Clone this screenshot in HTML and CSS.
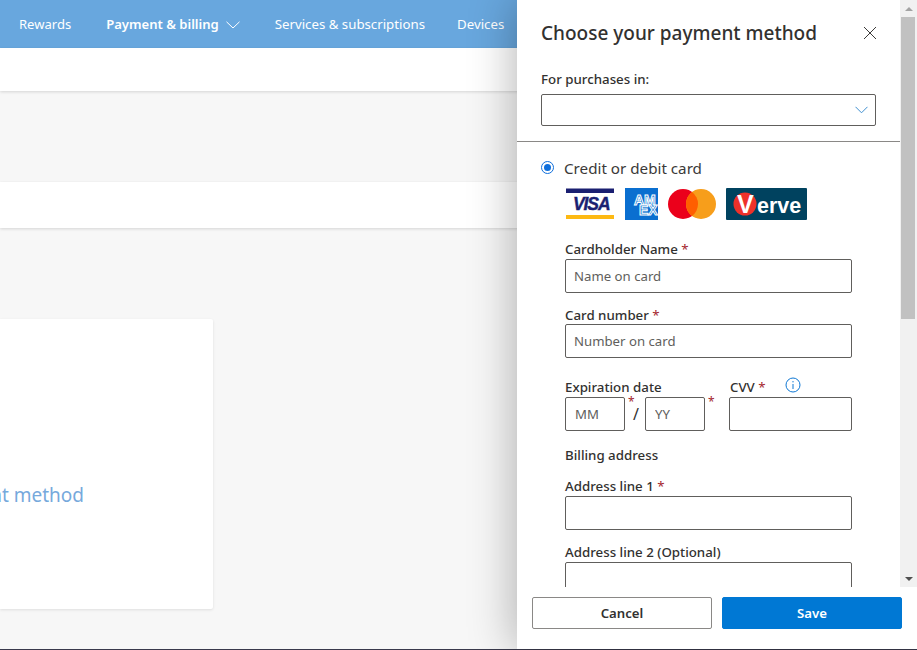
FILE: index.html
```html
<!DOCTYPE html>
<html lang="en">
<head>
<meta charset="utf-8">
<title>Choose your payment method</title>
<link rel="stylesheet" href="styles.css">
</head>
<body>
<div class="page">
  <nav class="topnav">
    <span class="nav-item">Rewards</span>
    <span class="nav-item nav-active">Payment &amp; billing
      <svg class="nav-chev" width="14" height="8" viewBox="0 0 14 8"><path d="M.5.8L7 7 13.5.8" fill="none" stroke="#fff" stroke-width="1"/></svg>
    </span>
    <span class="nav-item nav-wide">Services &amp; subscriptions</span>
    <span class="nav-item nav-wide">Devices</span>
  </nav>
  <div class="subbar"></div>
  <div class="band-gap"></div>
  <div class="subbar2"></div>
  <main class="content">
    <section class="card"><span class="card-link">Add a payment method</span></section>
  </main>
</div>

<aside class="panel">
  <div class="panel-top">
    <div class="scroller">
      <header class="panel-head">
        <div class="title-row">
          <h1 class="title">Choose your payment method</h1>
          <svg class="close" width="14" height="14" viewBox="0 0 14 14"><path d="M1 1l12 12M13 1L1 13" stroke="#3b3a39" stroke-width="1" fill="none"/></svg>
        </div>
        <label class="country-label">For purchases in:</label>
        <div class="select">
          <svg width="13" height="8" viewBox="0 0 13 8"><path d="M.5.8l6 6 6-6" fill="none" stroke="#3f8fd0" stroke-width="1"/></svg>
        </div>
      </header>
      <div class="form">
        <div class="radio-row">
          <span class="radio"><span class="radio-dot"></span></span>
          <span class="radio-label">Credit or debit card</span>
        </div>
        <div class="logos">
          <svg class="logo" width="50" height="32" viewBox="0 0 50 32">
            <rect x="1" y="0.5" width="48" height="4.5" fill="#1a1f71"/>
            <rect x="1" y="27" width="48" height="4" fill="#fdb913"/>
            <text x="8" y="22" class="visa-text">VISA</text>
          </svg>
          <svg class="logo" width="33" height="32" viewBox="0 0 33 32">
            <rect width="33" height="32" fill="#0a6fd0"/>
            <text x="9" y="17" class="amex-text">AM</text>
            <text x="14" y="27" class="amex-text">EX</text>
          </svg>
          <svg class="logo" width="48" height="32" viewBox="0 0 48 32">
            <circle cx="15" cy="16" r="15" fill="#eb001b"/>
            <circle cx="33" cy="16" r="15" fill="#f79e1b"/>
            <path d="M24 4a15 15 0 0 1 0 24a15 15 0 0 1 0-24z" fill="#ff5f00"/>
          </svg>
          <svg class="logo" width="81" height="32" viewBox="0 0 81 32">
            <rect width="81" height="32" rx="1" fill="#00425f"/>
            <circle cx="19" cy="16" r="11.5" fill="#ee312a"/>
            <text x="11" y="25" class="verve-v">V</text>
            <text x="31" y="25" class="verve-text">erve</text>
          </svg>
        </div>

        <label class="field-label first">Cardholder Name <span class="req">*</span></label>
        <input class="input" type="text" placeholder="Name on card">

        <label class="field-label second">Card number <span class="req">*</span></label>
        <input class="input" type="text" placeholder="Number on card">

        <div class="expiry">
          <div class="exp-col">
            <label class="exp-label">Expiration date</label>
            <div class="exp-inputs">
              <input class="input small" type="text" placeholder="MM">
              <span class="req sup">*</span>
              <span class="slash">/</span>
              <input class="input small" type="text" placeholder="YY">
              <span class="req sup">*</span>
            </div>
          </div>
          <div class="cvv-col">
            <div class="cvv-head">
              <label class="exp-label">CVV <span class="req">*</span></label>
              <svg class="info" width="16" height="16" viewBox="0 0 16 16">
                <circle cx="8" cy="8" r="7" fill="none" stroke="#0f78d4" stroke-width="1"/>
                <path d="M8 7v5M8 4v1.4" stroke="#0f78d4" stroke-width="1" fill="none"/>
              </svg>
            </div>
            <input class="input" type="text">
          </div>
        </div>

        <div class="billing">Billing address</div>

        <label class="field-label addr1">Address line 1 <span class="req">*</span></label>
        <input class="input" type="text">

        <label class="field-label addr2">Address line 2 (Optional)</label>
        <input class="input" type="text">
      </div>
    </div>
    <div class="scrollbar">
      <div class="sb-btn"><span class="arrow-up"></span></div>
      <div class="sb-track"><div class="sb-thumb"></div></div>
      <div class="sb-btn"><span class="arrow-down"></span></div>
    </div>
  </div>
  <footer class="panel-foot">
    <button class="btn btn-cancel">Cancel</button>
    <button class="btn btn-save">Save</button>
  </footer>
</aside>
</body>
</html>
```
FILE: styles.css
```css
* { box-sizing: border-box; }
html, body { margin: 0; height: 650px; overflow: hidden; }
body {
  font-family: "Noto Sans", "Open Sans", sans-serif;
  font-size: 14px;
  color: #323130;
  background: #f7f7f7;
  border-bottom: 1px solid #3a3a4c;
}
.page { height: 649px; overflow: hidden; background: #f7f7f7; display: flex; flex-direction: column; }
.topnav {
  height: 48px;
  flex: none;
  background: #68a7de;
  color: #fff;
  display: flex;
  align-items: center;
  padding-left: 19px;
  gap: 32px;
  font-size: 13.05px;
  white-space: nowrap;
}
.nav-wide { font-size: 13.25px; }
.nav-active { font-weight: 600; display: flex; align-items: center; gap: 7px; padding: 0 3px; }
.nav-chev { margin-top: 1px; }
.subbar { height: 43px; flex: none; background: #fff; box-shadow: 0 1px 3px rgba(0,0,0,.14); }
.band-gap { height: 91px; flex: none; }
.subbar2 { height: 46px; flex: none; background: #fff; box-shadow: 0 1px 3px rgba(0,0,0,.14); }
.content { flex: 1; padding-top: 91px; }
.card {
  width: 213px;
  height: 290px;
  background: #fff;
  border-radius: 0 2px 2px 0;
  box-shadow: 0 1px 3px rgba(0,0,0,.1);
  position: relative;
  overflow: hidden;
}
.card-link {
  position: absolute;
  right: 129px;
  top: 164px;
  font-size: 19px;
  line-height: 24px;
  color: #76a9dc;
  white-space: nowrap;
}

.panel {
  position: absolute;
  top: 0;
  left: 517px;
  width: 400px;
  height: 649px;
  background: #fff;
  box-shadow: 0 0 45px rgba(0,0,0,.32);
  display: flex;
  flex-direction: column;
}
.panel-top { height: 587px; flex: none; display: flex; }
.scroller { flex: 1; min-width: 0; overflow: hidden; }
.panel-head { height: 142px; padding: 0 24px; border-bottom: 1px solid #8a8886; }
.title-row { height: 66px; display: flex; justify-content: space-between; align-items: center; }
.title { margin: 0; font-size: 19px; font-weight: 500; color: #323130; line-height: 26px; }
.close { margin-right: -1px; }
.country-label { display: block; font-size: 13.3px; font-weight: 500; line-height: 18px; margin-top: 4px; }
.select {
  margin-top: 6px;
  height: 32px;
  border: 1px solid #605e5c;
  border-radius: 2px;
  display: flex;
  align-items: center;
  justify-content: flex-end;
  padding-right: 7px;
}
.form { padding: 15px 24px 0; }
.radio-row { display: flex; align-items: center; height: 21px; gap: 10px; }
.radio {
  width: 13px; height: 13px;
  border: 1.5px solid #0f6fdc;
  border-radius: 50%;
  display: flex; align-items: center; justify-content: center;
  flex: none;
}
.radio-dot { width: 7px; height: 7px; border-radius: 50%; background: #0f6fdc; }
.radio-label { font-size: 15.2px; color: #3b3a39; }
.logos { display: flex; gap: 10px; margin: 10px 0 0 24px; height: 32px; }
.logo { display: block; flex: none; }
.visa-text { font: italic 700 17.5px "Liberation Sans", sans-serif; fill: #1a1f71; stroke: #1a1f71; stroke-width: .4px; letter-spacing: -1.1px; }
.amex-text { font: 700 14px "Liberation Sans", sans-serif; fill: #0a6fd0; stroke: #fff; stroke-width: 1px; }
.verve-v { font: 700 25px "Liberation Sans", sans-serif; fill: #fff; }
.verve-text { font: 700 21.5px "Liberation Sans", sans-serif; fill: #fff; }
.field-label, .exp-label, .billing {
  display: block;
  font-size: 13.3px;
  font-weight: 500;
  line-height: 18px;
  color: #323130;
  white-space: nowrap;
}
.field-label { margin: 13px 0 1px 24px; }
.field-label.first { margin-top: 20px; }
.field-label.second { margin-bottom: 0; }
.field-label.addr1 { margin-top: 13px; }
.field-label.addr2 { margin-top: 13px; margin-bottom: 1px; }
.req { color: #a4262c; font-weight: 400; }
.input {
  display: block;
  width: 287px;
  height: 34px;
  margin-left: 24px;
  padding: 0 8px;
  border: 1px solid #605e5c;
  border-radius: 2px;
  background: #fff;
  font: 13.2px "Noto Sans", sans-serif;
  color: #323130;
  outline: none;
}
.input::placeholder { color: #605e5c; opacity: 1; }
.expiry { display: flex; gap: 24px; margin: 20px 0 0 24px; }
.exp-col { width: 140px; }
.exp-label { height: 18px; }
.exp-inputs { display: flex; margin-top: 1px; position: relative; }
.input.small { width: 60px; margin: 0; padding: 0 9px; }
.sup { width: 0; overflow: visible; position: relative; left: 3px; top: 0; font-size: 12px; line-height: 10px; height: 10px; }
.slash { width: 20px; align-self: center; text-align: center; line-height: 14px; color: #323130; font-size: 16px; position: relative; top: 0; left: 1px; }
.cvv-col { width: 123px; }
.cvv-col .input { width: 123px; margin: 1px 0 0; }
.cvv-head { display: flex; height: 18px; align-items: center; gap: 20px; }
.cvv-head .exp-label { margin-left: 1px; }
.info { flex: none; position: relative; top: -2px; left: -1px; }
.billing { margin: 15px 0 0 24px; }

.scrollbar { width: 17px; flex: none; background: #f1f1f1; display: flex; flex-direction: column; }
.sb-btn { height: 17px; display: flex; align-items: center; justify-content: center; flex: none; }
.arrow-up { width: 0; height: 0; border: 4px solid transparent; border-top: 0; border-bottom: 4px solid #a3a3a3; }
.arrow-down { width: 0; height: 0; border: 4px solid transparent; border-bottom: 0; border-top: 4px solid #505050; }
.sb-track { flex: 1; padding: 0 2px 0 1px; }
.sb-thumb { height: 302px; background: #c1c1c1; }

.panel-foot { flex: 1; display: flex; gap: 10px; padding: 10px 15px 0; }
.btn {
  width: 180px;
  height: 32px;
  border-radius: 2px;
  font: 600 13.2px "Noto Sans", sans-serif;
  cursor: pointer;
}
.btn-cancel { background: #fff; border: 1px solid #8a8886; color: #323130; }
.btn-save { background: #0078d4; border: 1px solid #0078d4; color: #fff; }
```
